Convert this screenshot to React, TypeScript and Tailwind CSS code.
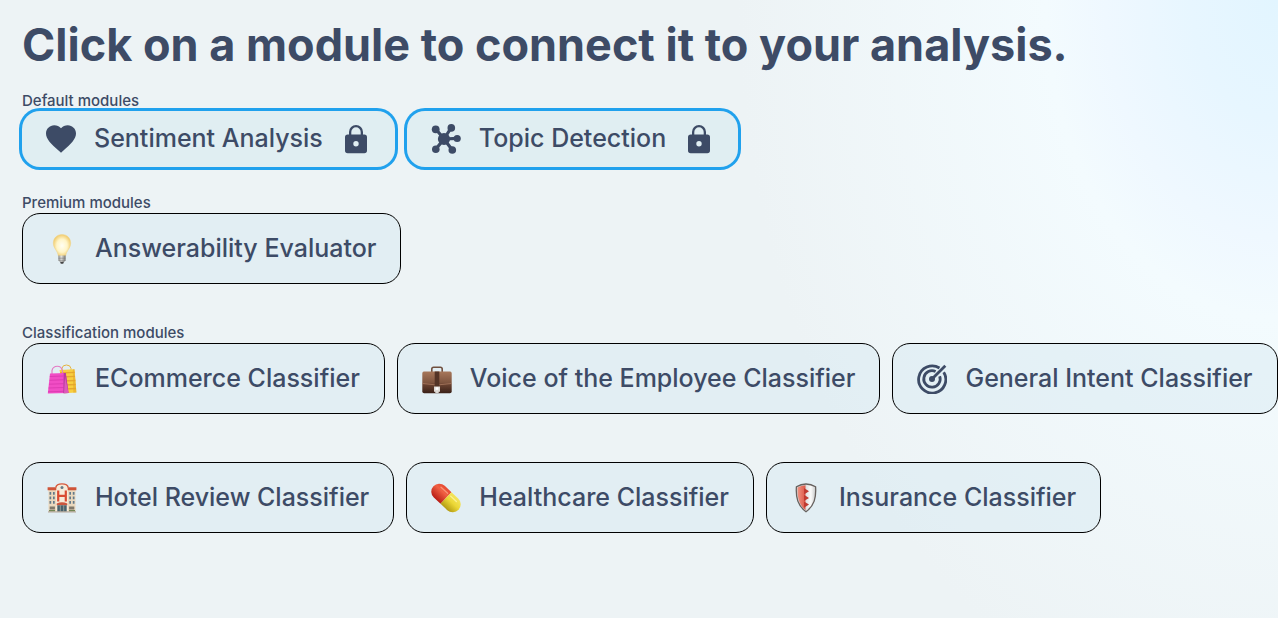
import React from "react";
import { MdFavorite } from "react-icons/md";

function HeartIcon() {
  return <MdFavorite viewBox="2 2.2 20 20" className="size-[30px] shrink-0" />;
}

function LockIcon() {
  return (
    <svg viewBox="0 0 30 30" className="size-[30px] shrink-0" fill="currentColor" aria-hidden="true">
      <path
        fillRule="evenodd"
        d="M23.3 10.6H22V8a7 7 0 0 0-14 0v2.6H6.7A2.7 2.7 0 0 0 4 13.3v13.2a2.7 2.7 0 0 0 2.7 2.7h16.6a2.7 2.7 0 0 0 2.7-2.7V13.3a2.7 2.7 0 0 0-2.7-2.7ZM15 22.4A2.7 2.7 0 1 1 15 17a2.7 2.7 0 0 1 0 5.4ZM10.3 10.6V8a4.7 4.7 0 0 1 9.4 0v2.6Z"
      />
    </svg>
  );
}

function TopicIcon() {
  return (
    <svg viewBox="0 0 30 30" className="size-[30px] shrink-0" fill="currentColor" aria-hidden="true">
      <path
        d="M13 15 5 5.3M13 15l7.3-11.5M13 15l13.5-.7M13 15l8.3 11M13 15 4.7 25.3"
        stroke="currentColor"
        strokeWidth="3.2"
      />
      <circle cx="13" cy="15" r="6.1" />
      <circle cx="4.7" cy="5.3" r="3.9" />
      <circle cx="20.3" cy="3.9" r="3.8" />
      <circle cx="26.2" cy="14.5" r="3.6" />
      <circle cx="21.3" cy="26" r="3.8" />
      <circle cx="4.8" cy="25.3" r="3.8" />
    </svg>
  );
}

function TargetIcon() {
  return (
    <svg viewBox="0 0 30 30" className="size-[30px] shrink-0" fill="none" stroke="currentColor" strokeWidth="2.8" aria-hidden="true">
      <path d="M22.5 4A13.6 13.6 0 1 0 26.7 8.2" />
      <path d="M18.6 7.6A8.2 8.2 0 1 0 22.7 12.2" />
      <path d="M15 15 28.3 1.8" />
      <circle cx="15" cy="15" r="3" fill="currentColor" stroke="none" />
    </svg>
  );
}

function BulbIcon() {
  return (
    <svg viewBox="0 0 30 30" className="size-[30px] shrink-0" aria-hidden="true">
      <defs>
        <radialGradient id="bulbGlass" cx="50%" cy="52%" r="55%">
          <stop offset="0" stopColor="#fffef2" />
          <stop offset="0.55" stopColor="#fff5c8" />
          <stop offset="1" stopColor="#efc662" />
        </radialGradient>
        <linearGradient id="bulbBase">
          <stop offset="0" stopColor="#8b8b88" />
          <stop offset="0.4" stopColor="#e4e4e0" />
          <stop offset="1" stopColor="#747470" />
        </linearGradient>
      </defs>
      <path d="M15 .5C9.8.5 6.3 4.3 6.3 9.2c0 5.3 4.4 7.3 5.1 12.8h7.2c.7-5.5 5.1-7.5 5.1-12.8C23.7 4.3 20.2.5 15 .5Z" fill="url(#bulbGlass)" stroke="#efd58a" strokeWidth=".5" />
      <path d="M11.4 21.5h7.2v4.8l-1.5 1.7h-4.2l-1.5-1.7Z" fill="url(#bulbBase)" />
      <path d="M11.5 24.2h7M12 26.3h6" stroke="#777" strokeWidth=".6" />
      <path d="M13 27.8h4l-.8 1.9h-2.4Z" fill="#454545" />
    </svg>
  );
}

function BagsIcon() {
  return (
    <svg viewBox="0 0 30 30" className="size-[30px] shrink-0" aria-hidden="true">
      <path d="M15 8V4.2Q15.5 1 19.5 1T24 4.5V8" fill="none" stroke="#e5b33f" strokeWidth="1" />
      <path d="M12.5 6 27.5 5.2 29.4 28.6 17.5 29.3Z" fill="#f8cf3f" />
      <path d="m13 9 14.7-.6M14 13l14-.6m-13 4.6 13.4-.5M16 21l12.7-.5M17 25l12-.5" stroke="#e6a72e" strokeWidth="1.3" />
      <path d="m25.8 5.3 1.7-.1 1.9 23.4-3.1.2Z" fill="#e3a52a" opacity=".55" />
      <path d="M5 11V6.5Q6 2.3 10.3 2.3T15.5 7v4" fill="none" stroke="#e37ac4" strokeWidth="1.1" />
      <path d="M3 9.5 18.8 9 21.5 29 .8 29.6Z" fill="#f14dc5" />
      <path d="m2.8 12.5 13.7-.5M2.5 16.3l14-.5M2 20.2l14.5-.5M1.5 24l15-.5M1 27.8l15.5-.5" stroke="#d837ad" strokeWidth=".8" />
      <path d="M16.7 9.1 18.8 9l2.7 20-5.2.2Z" fill="#b83b9d" />
      <path d="M18 12.5 17 29.2l4.5-.2Z" fill="#dd59bb" />
    </svg>
  );
}

function BriefcaseIcon() {
  return (
    <svg viewBox="0 0 30 30" className="size-[30px] shrink-0" aria-hidden="true">
      <defs>
        <linearGradient id="caseLeather" x1="0" y1="0" x2="0" y2="1">
          <stop offset="0" stopColor="#a7775a" />
          <stop offset="0.5" stopColor="#805640" />
          <stop offset="0.6" stopColor="#6a4331" />
          <stop offset="1" stopColor="#392017" />
        </linearGradient>
      </defs>
      <path d="M9.8 8V5Q9.8 3.2 11.6 3.2h6.8Q20.2 3.2 20.2 5v3" fill="none" stroke="#70503f" strokeWidth="1.6" />
      <path d="M1.8 7.5h26.4q1.5 0 1.5 2v17.7q0 2.1-1.8 2.1H2.1q-1.8 0-1.8-2.1V9.5q0-2 1.5-2Z" fill="url(#caseLeather)" />
      <path d="M.6 19.5Q15 22.5 29.4 19.5" fill="none" stroke="#b38367" strokeWidth=".7" />
      <path d="M12.7 7.5h4.6V23h-4.6Z" fill="#543426" />
      <path d="M12 22.5h6v5.3h-1.3v1.3h-3.4v-1.3H12Z" fill="#ddd9d4" />
      <path d="M13.6 23.3h2.8v2.5h-2.8Z" fill="#fff" />
    </svg>
  );
}

function HotelIcon() {
  return (
    <svg viewBox="0 0 30 30" className="size-[30px] shrink-0" aria-hidden="true">
      <path d="M1.5 7h27v21.5h-27Z" fill="#ead8bd" />
      <path d="M9 28V4.2Q10 1 15 1t6 3.2V28Z" fill="#f6ead8" />
      <path d="M.6 4.3h8.7v2.9H.6Zm20.1 0h8.7v2.9h-8.7Z" fill="#cf5438" />
      <path d="M8.8 4.5Q9.5.9 15 .9t6.2 3.6" fill="none" stroke="#d65a3d" strokeWidth="1.4" />
      <circle cx="15" cy="4.6" r="1.5" fill="#657b87" />
      <path d="M2.5 9h1.7v2.7H2.5ZM6 9h1.7v2.7H6Zm-3.5 4.5h1.7v2.7H2.5Zm3.5 0h1.7v2.7H6ZM2.5 18h1.7v2.7H2.5ZM6 18h1.7v2.7H6ZM22.3 9H24v2.7h-1.7Zm3.5 0h1.7v2.7h-1.7Zm-3.5 4.5H24v2.7h-1.7Zm3.5 0h1.7v2.7h-1.7ZM22.3 18H24v2.7h-1.7Zm3.5 0h1.7v2.7h-1.7Z" fill="#62798a" />
      <path d="M11.2 7.4v11m7.6-11v11m-7.6-5.5h7.6" fill="none" stroke="#d94b31" strokeWidth="2.2" />
      <path d="M9.7 20.6Q15 18 20.3 20.6v1.7H9.7Z" fill="#ca563d" />
      <path d="M10.3 22.3h9.4v6.5h-9.4Z" fill="#48616c" />
      <path d="M13.3 22.3v6.5m3.4-6.5v6.5" stroke="#b3b4a5" strokeWidth=".7" />
      <path d="M2.7 23.5h5.2v3H2.7Zm19.4 0h5.2v3h-5.2Z" fill="#7f786b" />
      <path d="M2 27h6v1.5H2Zm20 0h6v1.5h-6Z" fill="#718653" />
      <path d="M1 28.3h28v1.2H1Z" fill="#b6a99a" />
    </svg>
  );
}

function PillIcon() {
  return (
    <svg viewBox="0 0 30 30" className="size-[30px] shrink-0" aria-hidden="true">
      <defs>
        <linearGradient id="pillRed" x1="0" y1="0" x2="0" y2="1">
          <stop offset="0" stopColor="#e64a32" />
          <stop offset="0.35" stopColor="#f06043" />
          <stop offset="1" stopColor="#b81b14" />
        </linearGradient>
        <linearGradient id="pillYellow" x1="0" y1="0" x2="0" y2="1">
          <stop offset="0" stopColor="#f4e45e" />
          <stop offset="0.45" stopColor="#ecd836" />
          <stop offset="1" stopColor="#b39b13" />
        </linearGradient>
      </defs>
      <g transform="rotate(43 15 15)">
        <path d="M15 7H5.8a8 8 0 0 0 0 16H15Z" fill="url(#pillRed)" />
        <path d="M15 7h9.2a8 8 0 0 1 0 16H15Z" fill="url(#pillYellow)" />
        <path d="M4 10.5h9" stroke="#ffad8f" strokeWidth="1.3" strokeLinecap="round" opacity=".7" />
        <path d="M17 10.5h8" stroke="#fff9ae" strokeWidth="1.3" strokeLinecap="round" opacity=".7" />
      </g>
    </svg>
  );
}

function ShieldIcon() {
  return (
    <svg viewBox="0 0 30 30" className="size-[30px] shrink-0" aria-hidden="true">
      <defs>
        <linearGradient id="shieldSteel">
          <stop offset="0.4" stopColor="#d2d4d4" />
          <stop offset="0.75" stopColor="#fbfbfa" />
          <stop offset="1" stopColor="#c4c6c6" />
        </linearGradient>
        <linearGradient id="shieldRed">
          <stop offset="0" stopColor="#f09382" />
          <stop offset="1" stopColor="#dc5747" />
        </linearGradient>
      </defs>
      <path d="M15 1Q20 1 24.6 3.8C25.3 15 23.3 22.5 15 28.8 6.7 22.5 4.7 15 5.4 3.8Q10 1 15 1Z" fill="url(#shieldSteel)" stroke="#66605d" strokeWidth="1.3" />
      <path d="M14.5 2.2Q10 2.4 6.6 4.6C6.2 14.5 8 21.8 14.5 27.2Z" fill="url(#shieldRed)" />
      <path d="M13 5 18 8.2 13 11.4ZM13 11.7l5 3.2-5 3.2Zm0 6.7 5 3.2-5 3.2Z" fill="#c03a30" />
    </svg>
  );
}

const classifiers = [
  { name: "ECommerce Classifier", icon: <BagsIcon /> },
  { name: "Voice of the Employee Classifier", icon: <BriefcaseIcon /> },
  { name: "General Intent Classifier", icon: <TargetIcon /> },
  { name: "Hotel Review Classifier", icon: <HotelIcon /> },
  { name: "Healthcare Classifier", icon: <PillIcon /> },
  { name: "Insurance Classifier", icon: <ShieldIcon /> },
];

function DefaultModule({ name, icon }: { name: string; icon: React.ReactNode }) {
  return (
    <button
      type="button"
      className="flex h-14 items-center gap-[18px] rounded-[18px] bg-[#e0eef2] px-6 text-[25px] font-medium whitespace-nowrap ring-3 ring-[#20a1ed]"
    >
      {icon}
      <span>{name}</span>
      <LockIcon />
    </button>
  );
}

function Module({ name, icon }: { name: string; icon: React.ReactNode }) {
  return (
    <button
      type="button"
      className="flex items-center gap-[18px] rounded-[18px] border border-black bg-[#d8eaf2]/50 px-6 py-4 text-[25px] leading-[37px] font-medium whitespace-nowrap"
    >
      {icon}
      <span>{name}</span>
    </button>
  );
}

export default function App() {
  return (
    <main className="min-h-screen bg-[#edf3f5] bg-[radial-gradient(ellipse_540px_740px_at_top_right,#e2f5ff_0%,#e7f6ff_16%,#eff8ff_32%,#f3fbfe_43%,#edf3f5_100%)] pt-[15px] pl-[22px] font-['Inter',sans-serif] text-[#3d4b66]">
      <h1 className="text-[45px] leading-[60px] font-bold">Click on a module to connect it to your analysis.</h1>

      <section className="pt-4">
        <h2 className="text-[15px] leading-5 font-medium">Default modules</h2>
        <div className="flex flex-wrap gap-3">
          <DefaultModule name="Sentiment Analysis" icon={<HeartIcon />} />
          <DefaultModule name="Topic Detection" icon={<TopicIcon />} />
        </div>
      </section>

      <section className="pt-[26px]">
        <h2 className="text-[15px] leading-5 font-medium">Premium modules</h2>
        <div className="flex flex-wrap gap-3">
          <Module name="Answerability Evaluator" icon={<BulbIcon />} />
        </div>
      </section>

      <section className="pt-[39px]">
        <h2 className="text-[15px] leading-5 font-medium">Classification modules</h2>
        <div className="flex flex-wrap gap-x-3 gap-y-12">
          {classifiers.map((item) => (
            <Module key={item.name} name={item.name} icon={item.icon} />
          ))}
        </div>
      </section>
    </main>
  );
}
